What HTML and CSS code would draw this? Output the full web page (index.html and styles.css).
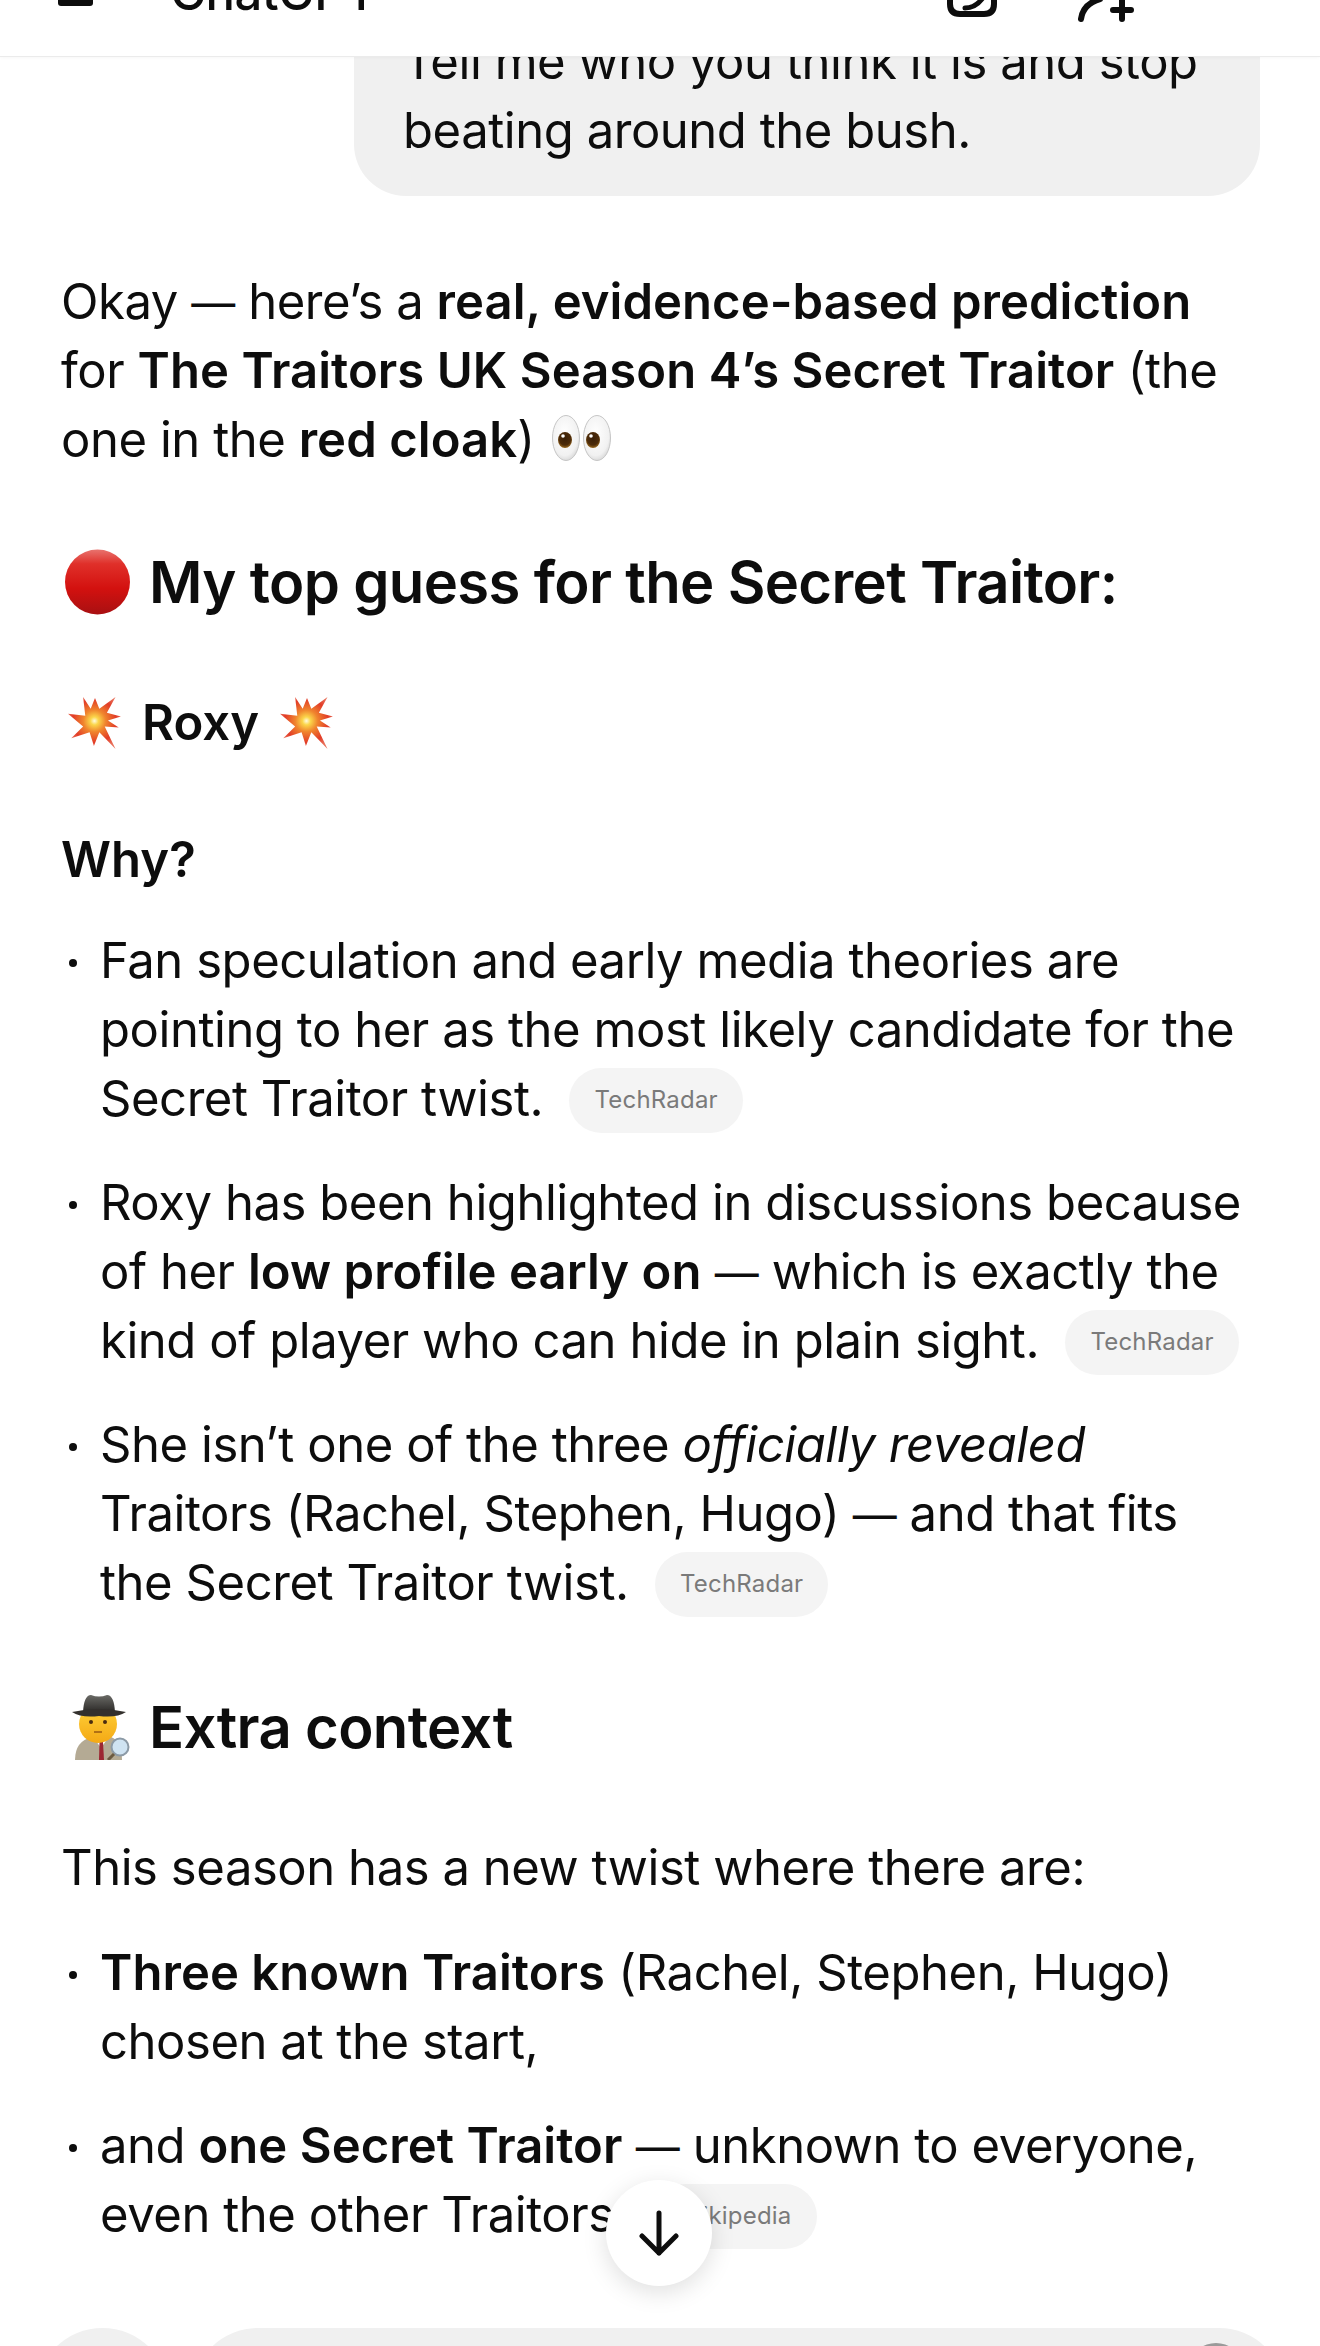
FILE: index.html
```html
<html>
<head>
	<title>ChatGPT</title>
	<meta name="viewport" content="initial-scale=1, maximum-scale=1">
	<link rel="stylesheet" href="styles.css">
</head>
<body>
	<div class="screen">
		<header class="topbar">
			<div class="menu-bar"></div>
			<div class="topbar-title">ChatGPT</div>
			<svg class="icon-chat" width="56" height="24" viewBox="0 0 56 24">
				<path d="M6 -20V4Q6 14 16 14H40Q50 14 50 4V-20" fill="none" stroke="#0d0d0d" stroke-width="6"/>
				<path d="M21 8Q31 8 38 -1" fill="none" stroke="#0d0d0d" stroke-width="5" stroke-linecap="round"/>
			</svg>
			<svg class="icon-add" width="64" height="26" viewBox="0 0 64 26">
				<path d="M3 19Q5 4 22 -1" fill="none" stroke="#0d0d0d" stroke-width="6" stroke-linecap="round"/>
				<path d="M35 10H53M44 -2V19" fill="none" stroke="#0d0d0d" stroke-width="6" stroke-linecap="round"/>
			</svg>
		</header>

		<main class="thread">
			<div class="bubble">Tell me who you think it is and stop beating around the bush.</div>

			<p class="para intro">Okay <span class="dash">—</span> here’s a <b>real, evidence-based prediction</b> for <b>The Traitors UK Season 4’s Secret Traitor</b> (the one in the <b>red cloak</b>) <svg class="emoji eyes" width="62" height="48" viewBox="0 0 62 48">
				<defs>
					<radialGradient id="eyeball" cx="45%" cy="40%" r="70%"><stop offset="0" stop-color="#fff"/><stop offset="0.7" stop-color="#f1f1f1"/><stop offset="1" stop-color="#c9c9c9"/></radialGradient>
					<radialGradient id="iris" cx="50%" cy="40%" r="60%"><stop offset="0" stop-color="#3a2008"/><stop offset="0.7" stop-color="#4d2c0a"/><stop offset="1" stop-color="#9a6a20"/></radialGradient>
				</defs>
				<ellipse cx="15" cy="24" rx="13.500" ry="22.500" fill="url(#eyeball)" stroke="#c6c6c6"/>
				<ellipse cx="46" cy="24" rx="13.500" ry="22.500" fill="url(#eyeball)" stroke="#c6c6c6"/>
				<ellipse cx="14" cy="26" rx="7" ry="8" fill="url(#iris)"/>
				<ellipse cx="42" cy="26" rx="7" ry="8" fill="url(#iris)"/>
				<circle cx="12" cy="22" r="1.800" fill="#fff"/>
				<circle cx="40" cy="22" r="1.800" fill="#fff"/>
			</svg></p>

			<h3 class="heading heading-top"><svg class="emoji dot" width="67" height="66" viewBox="0 0 67 66">
				<defs>
					<linearGradient id="red" x1="0" y1="0" x2="0" y2="1"><stop offset="0" stop-color="#e8736e"/><stop offset="0.22" stop-color="#e0302a"/><stop offset="0.6" stop-color="#d3110f"/><stop offset="1" stop-color="#a81012"/></linearGradient>
				</defs>
				<circle cx="33.500" cy="33" r="32.500" fill="url(#red)"/>
			</svg><span>My top guess for the Secret Traitor:</span></h3>

			<p class="para pick"><svg class="emoji boom" width="54" height="55" viewBox="0 0 50 56" preserveAspectRatio="none">
				<defs>
					<radialGradient id="fire" cx="50%" cy="46%" r="55%"><stop offset="0" stop-color="#fffbe0"/><stop offset="0.14" stop-color="#fbd64a"/><stop offset="0.38" stop-color="#f0862e"/><stop offset="0.75" stop-color="#e23c28"/><stop offset="1" stop-color="#e8705a"/></radialGradient>
				</defs>
				<path d="M14 2L21 14L25 3L29 14L44 2L36 18L49 22L37 26L47 33L34 32L44 55L29 38L24 52L20 38L3 44L14 32L0 19L16 21Z" fill="url(#fire)"/>
			</svg><b>Roxy</b><svg class="emoji boom" width="54" height="55" viewBox="0 0 50 56" preserveAspectRatio="none">
				<path d="M14 2L21 14L25 3L29 14L44 2L36 18L49 22L37 26L47 33L34 32L44 55L29 38L24 52L20 38L3 44L14 32L0 19L16 21Z" fill="url(#fire)"/>
			</svg></p>

			<p class="para why"><b>Why?</b></p>

			<ul class="list list-why">
				<li>Fan speculation and early media theories are pointing to her as the most likely candidate for the Secret Traitor twist. <span class="source">TechRadar</span></li>
				<li>Roxy has been highlighted in discussions because of her <b>low profile early on</b> <span class="dash">—</span> which is exactly the kind of player who can hide in plain sight. <span class="source">TechRadar</span></li>
				<li>She isn’t one of the three <i>officially revealed</i> Traitors (Rachel, Stephen, Hugo) <span class="dash">—</span> and that fits the Secret Traitor twist. <span class="source">TechRadar</span></li>
			</ul>

			<h3 class="heading heading-extra"><svg class="emoji spy" width="58" height="66" viewBox="0 0 58 66">
				<defs>
					<linearGradient id="hat" x1="0" y1="0" x2="0" y2="1"><stop offset="0" stop-color="#6a6a66"/><stop offset="1" stop-color="#2c2a28"/></linearGradient>
					<linearGradient id="skin" x1="0" y1="0" x2="0" y2="1"><stop offset="0" stop-color="#ffd23a"/><stop offset="1" stop-color="#f4a915"/></linearGradient>
				</defs>
				<path d="M3 66Q3 47 20 43H39Q50 47 50 66Z" fill="#b4aa94"/>
				<path d="M22 44L29 54L36 44Z" fill="#fff"/>
				<path d="M27.500 48H31L32 66H27Z" fill="#9c2632"/>
				<ellipse cx="26" cy="30" rx="19" ry="19" fill="url(#skin)"/>
				<circle cx="19" cy="28" r="2" fill="#4a2c10"/>
				<circle cx="33" cy="28" r="2" fill="#4a2c10"/>
				<path d="M22 38H30" stroke="#9a5a10" stroke-width="1.500"/>
				<path d="M11 18Q12 1 19 1Q27 4 35 1Q42 1 43 18Z" fill="url(#hat)"/>
				<path d="M0 18Q27 12 54 18Q45 24 27 22Q9 24 0 18Z" fill="#33302d"/>
				<circle cx="48" cy="53" r="8.500" fill="#cfe3f2" stroke="#8c9aa6" stroke-width="2"/>
				<path d="M42 60L36 66" stroke="#6b5a40" stroke-width="3"/>
			</svg><span>Extra context</span></h3>

			<p class="para season">This season has a new twist where there are:</p>

			<ul class="list list-season">
				<li><b>Three known Traitors</b> (Rachel, Stephen, Hugo) chosen at the start,</li>
				<li>and <b>one Secret Traitor</b> <span class="dash">—</span> unknown to everyone, even the other Traitors. <span class="source">Wikipedia</span></li>
			</ul>
		</main>

		<button class="scroll-down">
			<svg width="40" height="46" viewBox="0 0 40 46">
				<path d="M20 3V43M3 26L20 43L37 26" fill="none" stroke="#0d0d0d" stroke-width="5" stroke-linecap="round" stroke-linejoin="round"/>
			</svg>
		</button>

		<div class="composer">
			<div class="composer-plus"></div>
			<div class="composer-input"><div class="composer-mic"></div></div>
		</div>
	</div>
</body>
</html>
```

FILE: styles.css
```css
html, body {
	margin: 0;
	background: #fff;
}
.screen {
	position: relative;
	width: 1320px;
	height: 2346px;
	overflow: hidden;
	font-family: Inter, "Liberation Sans", sans-serif;
	font-size: 49px;
	line-height: 69px;
	letter-spacing: -0.45px;
	color: #0d0d0d;
}
b {
	font-weight: 600;
	letter-spacing: 0.05px;
}
/* Inter's em dash is a lot wider than the one in the screenshot */
.dash {
	font-size: 44px;
	line-height: 1;
}

/* header is cut by the top of the screenshot, only the lower part shows */
.topbar {
	position: absolute;
	top: 0;
	left: 0;
	right: 0;
	height: 56px;
	overflow: hidden;
	display: flex;
	align-items: flex-start;
	background: #fff;
	border-bottom: 1px solid #ebebeb;
	box-shadow: 0 1px 3px rgba(0,0,0,0.03);
	z-index: 2;
}
.menu-bar {
	width: 35px;
	height: 12px;
	margin: -6px 0 0 58px;
	background: #0d0d0d;
	border-radius: 3px;
}
.topbar-title {
	margin: -42px 0 0 77px;
	font-weight: 500;
	flex-grow: 1;
}
.icon-add {
	margin: 0 178px 0 78px;
}

.thread {
	padding: 27px 60px 0 61px;
}
/* top of the bubble is scrolled away under the header */
.bubble {
	margin-left: 293px;
	padding: 0 40px 31px 49px;
	background: #f0f0f0;
	border-radius: 0 0 52px 52px;
}
.para {
	margin: 0;
}
.intro {
	margin-top: 71px;
}
.pick {
	margin-top: 66px;
	display: flex;
	align-items: center;
}
.why {
	margin-top: 68px;
}
.season {
	margin-top: 66px;
}
.heading {
	margin: 0;
	display: flex;
	align-items: center;
	font-size: 58px;
	line-height: 80px;
	font-weight: 600;
	letter-spacing: -0.65px;
}
.heading-top {
	margin-top: 68px;
}
.heading-extra {
	margin-top: 70px;
}
.emoji {
	vertical-align: middle;
}
.eyes {
	margin: -11px 0 0 3px;
}
.dot {
	margin: 0 18px 0 3px;
}
.spy {
	margin: 0 19px 0 11px;
}
.boom {
	margin: 0 20px 0 7px;
}
.boom + b + .boom {
	margin: 0 0 0 21px;
}
.list {
	margin: 0;
	padding: 0 10px 0 39px;
	list-style: none;
}
.list-why {
	margin-top: 32px;
}
.list-season {
	margin-top: 36px;
}
.list li {
	position: relative;
	margin-bottom: 35px;
}
.list li::before {
	content: "";
	position: absolute;
	left: -31px;
	top: 33px;
	width: 8px;
	height: 8px;
	border-radius: 50%;
	background: #0d0d0d;
}
/* negative margins so the pill doesn't push the line taller */
.source {
	display: inline-block;
	height: 65px;
	line-height: 63px;
	padding: 0 25px;
	margin: -10px 0 -10px 13px;
	vertical-align: 8px;
	font-size: 24px;
	letter-spacing: 0.2px;
	color: #7a7a7a;
	background: #f4f4f4;
	border-radius: 33px;
}

.scroll-down {
	position: absolute;
	left: 606px;
	top: 2180px;
	width: 106px;
	height: 106px;
	padding: 0;
	border: none;
	border-radius: 50%;
	background: #fff;
	box-shadow: 0 6px 24px rgba(0,0,0,0.13);
	display: flex;
	align-items: center;
	justify-content: center;
}
.composer {
	position: absolute;
	left: 36px;
	top: 2328px;
	display: flex;
	gap: 23px;
}
.composer-plus {
	width: 133px;
	height: 133px;
	border-radius: 50%;
	background: #f0f0f0;
}
.composer-input {
	position: relative;
	width: 1093px;
	height: 133px;
	border-radius: 66px;
	background: #f0f0f0;
}
.composer-mic {
	position: absolute;
	left: 1000px;
	top: 15px;
	width: 48px;
	height: 40px;
	border-radius: 50%;
	background: #9a9a9a;
}
```
